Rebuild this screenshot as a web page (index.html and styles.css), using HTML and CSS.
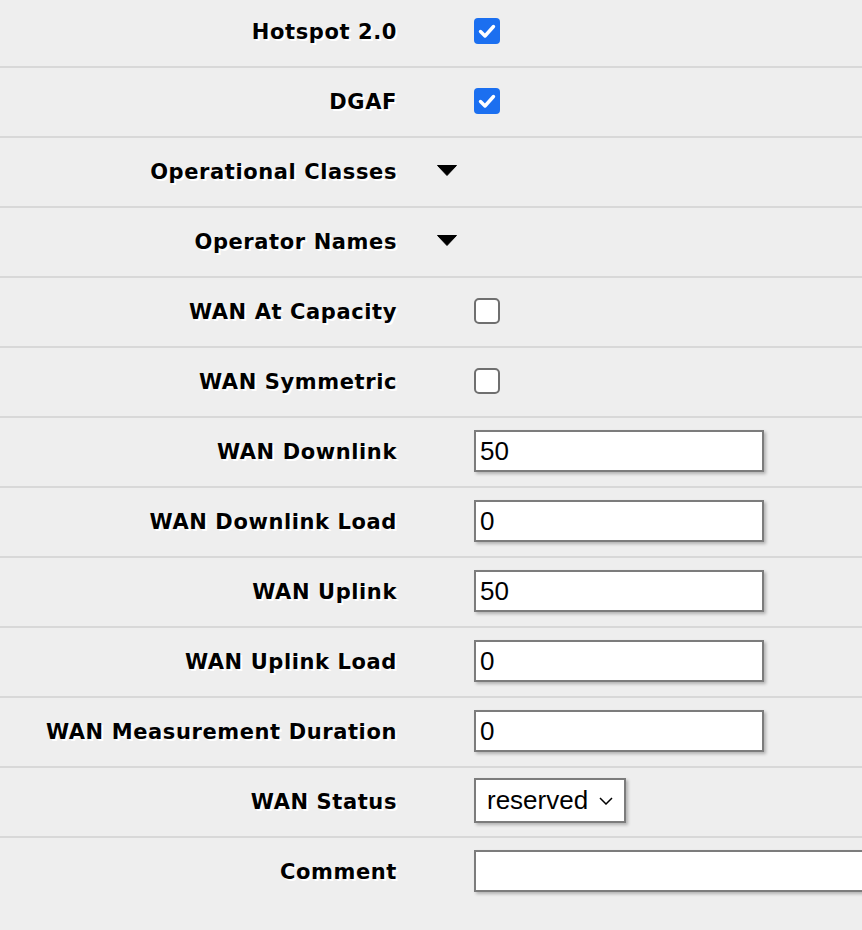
FILE: index.html
```html
<!DOCTYPE html>
<html>
<head>
<meta charset="utf-8">
<link rel="stylesheet" href="styles.css">
</head>
<body>
<div class="form">
  <div class="row">
    <div class="label">Hotspot 2.0</div>
    <div class="toggle"></div>
    <div class="value"><span class="cb checked"><svg width="18" height="15" viewBox="0 0 18 15"><path d="M2.5 7.5 L7 12 L15.5 2.5" fill="none" stroke="#fff" stroke-width="3.4" stroke-linecap="round" stroke-linejoin="round"/></svg></span></div>
  </div>
  <div class="row">
    <div class="label">DGAF</div>
    <div class="toggle"></div>
    <div class="value"><span class="cb checked"><svg width="18" height="15" viewBox="0 0 18 15"><path d="M2.5 7.5 L7 12 L15.5 2.5" fill="none" stroke="#fff" stroke-width="3.4" stroke-linecap="round" stroke-linejoin="round"/></svg></span></div>
  </div>
  <div class="row">
    <div class="label">Operational Classes</div>
    <div class="toggle"><svg class="tri" width="20" height="11" viewBox="0 0 20 11"><path d="M0.5 0.5 H19.5 L10 10.5 Z" fill="#000" stroke="#000" stroke-width="1" stroke-linejoin="round"/></svg></div>
    <div class="value"></div>
  </div>
  <div class="row">
    <div class="label">Operator Names</div>
    <div class="toggle"><svg class="tri" width="20" height="11" viewBox="0 0 20 11"><path d="M0.5 0.5 H19.5 L10 10.5 Z" fill="#000" stroke="#000" stroke-width="1" stroke-linejoin="round"/></svg></div>
    <div class="value"></div>
  </div>
  <div class="row">
    <div class="label">WAN At Capacity</div>
    <div class="toggle"></div>
    <div class="value"><span class="cb"></span></div>
  </div>
  <div class="row">
    <div class="label">WAN Symmetric</div>
    <div class="toggle"></div>
    <div class="value"><span class="cb"></span></div>
  </div>
  <div class="row">
    <div class="label">WAN Downlink</div>
    <div class="toggle"></div>
    <div class="value"><div class="input">50</div></div>
  </div>
  <div class="row">
    <div class="label">WAN Downlink Load</div>
    <div class="toggle"></div>
    <div class="value"><div class="input">0</div></div>
  </div>
  <div class="row">
    <div class="label">WAN Uplink</div>
    <div class="toggle"></div>
    <div class="value"><div class="input">50</div></div>
  </div>
  <div class="row">
    <div class="label">WAN Uplink Load</div>
    <div class="toggle"></div>
    <div class="value"><div class="input">0</div></div>
  </div>
  <div class="row">
    <div class="label">WAN Measurement Duration</div>
    <div class="toggle"></div>
    <div class="value"><div class="input">0</div></div>
  </div>
  <div class="row">
    <div class="label">WAN Status</div>
    <div class="toggle"></div>
    <div class="value"><div class="select"><span>reserved</span><svg width="14" height="8" viewBox="0 0 14 8"><path d="M1 1 L7 7 L13 1" fill="none" stroke="#000" stroke-width="1.5"/></svg></div></div>
  </div>
  <div class="row last">
    <div class="label">Comment</div>
    <div class="toggle"></div>
    <div class="value"><div class="input wide"></div></div>
  </div>
</div>
</body>
</html>
```

FILE: styles.css
```css
html, body {
  margin: 0;
  padding: 0;
  background: #eeeeee;
  overflow: hidden;
}
.form {
  margin-top: -2px;
  width: 862px;
  overflow: hidden;
}
.row {
  display: grid;
  grid-template-columns: 437px 37px 1fr;
  align-items: center;
  height: 68px;
  border-bottom: 2px solid #d8d8d8;
}
.row.last {
  border-bottom: none;
}
.label {
  padding-right: 41px;
  text-align: right;
  font-family: "DejaVu Sans", Verdana, sans-serif;
  font-weight: bold;
  font-size: 21px;
  letter-spacing: 0.6px;
  margin-right: -1px;
  color: #000;
  text-shadow: 2px 2px 0 #fff;
  white-space: nowrap;
}
.toggle {
  display: flex;
  align-items: center;
}
.tri {
  display: block;
  margin-top: -3px;
}
.value {
  display: flex;
  align-items: center;
  min-width: 0;
}
.cb {
  box-sizing: border-box;
  width: 26px;
  height: 26px;
  border: 2px solid #6f6f6f;
  border-radius: 5px;
  background: #fff;
  display: flex;
  align-items: center;
  justify-content: center;
  margin-top: -2px;
}
.cb.checked {
  background: #1b6ff0;
  border: none;
  border-radius: 4px;
}
.input {
  box-sizing: border-box;
  width: 290px;
  height: 42px;
  border: 2px solid #7c7c7c;
  background: #fff;
  box-shadow: 2px 2px 3px rgba(0, 0, 0, 0.25);
  font-family: "Liberation Sans", Arial, sans-serif;
  font-size: 26px;
  line-height: 38px;
  padding-left: 4px;
  color: #000;
  margin-top: -2px;
}
.input.wide {
  width: 420px;
  flex: none;
}
.select {
  box-sizing: border-box;
  width: 152px;
  height: 45px;
  border: 2px solid #7c7c7c;
  background: #fff;
  box-shadow: 2px 2px 3px rgba(0, 0, 0, 0.25);
  font-family: "Liberation Sans", Arial, sans-serif;
  font-size: 26px;
  color: #000;
  display: flex;
  align-items: center;
  gap: 11px;
  padding-left: 11px;
  margin-top: -3px;
}
```
